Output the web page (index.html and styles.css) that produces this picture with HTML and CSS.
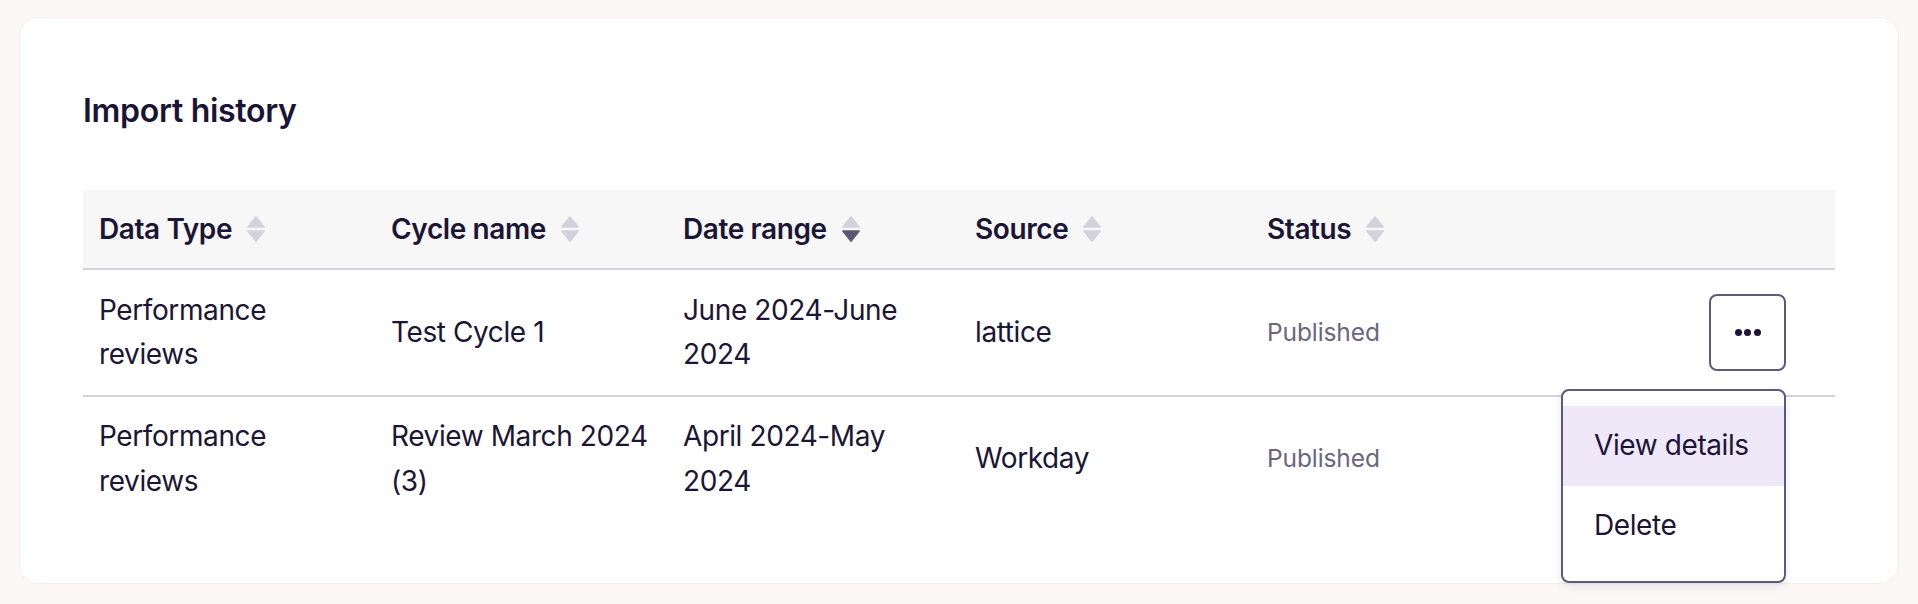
FILE: index.html
```html
<!DOCTYPE html>
<html lang="en">
<head>
<meta charset="utf-8">
<title>Import history</title>
<link rel="stylesheet" href="styles.css">
</head>
<body>
<div class="page">
  <section class="card">
    <h2 class="card-title">Import history</h2>
    <table class="history">
      <colgroup>
        <col class="col"><col class="col"><col class="col"><col class="col"><col class="col"><col class="col">
      </colgroup>
      <thead>
        <tr>
          <th><span class="th-inner">Data Type <svg class="sort" viewBox="0 0 18 26"><path class="up" d="M9 0.8 L17.2 11 L0.8 11 Z"/><path class="down" d="M0.8 15 L17.2 15 L9 25.2 Z"/></svg></span></th>
          <th><span class="th-inner">Cycle name <svg class="sort" viewBox="0 0 18 26"><path class="up" d="M9 0.8 L17.2 11 L0.8 11 Z"/><path class="down" d="M0.8 15 L17.2 15 L9 25.2 Z"/></svg></span></th>
          <th><span class="th-inner">Date range <svg class="sort active-down" viewBox="0 0 18 26"><path class="up" d="M9 0.8 L17.2 11 L0.8 11 Z"/><path class="down" d="M0.8 15 L17.2 15 L9 25.2 Z"/></svg></span></th>
          <th><span class="th-inner">Source <svg class="sort" viewBox="0 0 18 26"><path class="up" d="M9 0.8 L17.2 11 L0.8 11 Z"/><path class="down" d="M0.8 15 L17.2 15 L9 25.2 Z"/></svg></span></th>
          <th><span class="th-inner">Status <svg class="sort" viewBox="0 0 18 26"><path class="up" d="M9 0.8 L17.2 11 L0.8 11 Z"/><path class="down" d="M0.8 15 L17.2 15 L9 25.2 Z"/></svg></span></th>
          <th></th>
        </tr>
      </thead>
      <tbody>
        <tr>
          <td>Performance<br>reviews</td>
          <td>Test Cycle 1</td>
          <td>June 2024-June<br>2024</td>
          <td>lattice</td>
          <td class="status">Published</td>
          <td class="actions">
            <div class="action-wrap">
              <button class="more" type="button" aria-label="More actions"><span class="dot"></span><span class="dot"></span><span class="dot"></span></button>
              <ul class="menu">
                <li class="menu-item is-active">View details</li>
                <li class="menu-item">Delete</li>
              </ul>
            </div>
          </td>
        </tr>
        <tr>
          <td>Performance<br>reviews</td>
          <td>Review March 2024<br>(3)</td>
          <td>April 2024-May<br>2024</td>
          <td>Workday</td>
          <td class="status">Published</td>
          <td class="actions"></td>
        </tr>
      </tbody>
    </table>
  </section>
</div>
</body>
</html>
```

FILE: styles.css
```css
* { box-sizing: border-box; }

html, body {
  margin: 0;
  padding: 0;
  background: #fcf8f7;
}

body {
  font-family: "Inter", "Lato", "Liberation Sans", sans-serif;
  color: #1b1536;
}

.page {
  padding: 18px 20px 21px 20px;
}

.card {
  background: #ffffff;
  border-radius: 18px;
  padding: 70px 63px 62px 63px;
  box-shadow: 0 0 0 1px rgba(240, 232, 230, 0.6);
}

.card-title {
  margin: 0 0 57px 0;
  font-size: 32px;
  line-height: 45px;
  font-weight: 600;
  letter-spacing: -0.3px;
  color: #1b1436;
}

.history {
  width: 100%;
  border-collapse: collapse;
  table-layout: fixed;
}

.history .col { width: 16.666%; }

.history th {
  background: #f7f7f8;
  height: 79px;
  padding: 0 16px;
  text-align: left;
  font-size: 28px;
  font-weight: 600;
  letter-spacing: -0.4px;
  border-bottom: 2px solid #d4d2de;
  vertical-align: middle;
  white-space: nowrap;
}

.th-inner {
  display: inline-flex;
  align-items: center;
  gap: 15px;
}

.sort {
  width: 18px;
  height: 26px;
  display: block;
}

.sort path {
  fill: #d3d1dc;
  stroke: #d3d1dc;
  stroke-width: 1.4;
  stroke-linejoin: round;
}
.sort.active-down .down { fill: #5b5775; stroke: #5b5775; }

.history td {
  padding: 17.5px 16px;
  font-size: 28px;
  line-height: 44.8px;
  letter-spacing: -0.4px;
  vertical-align: middle;
  border-bottom: 2px solid #d4d2de;
}

.history tbody tr:last-child td { border-bottom: none; }

.history td.status {
  font-size: 24.5px;
  color: #6a667f;
  letter-spacing: -0.1px;
}

.history td.actions {
  padding-right: 49px;
}

.action-wrap {
  position: relative;
  display: flex;
  justify-content: flex-end;
}

.more {
  width: 77px;
  height: 77px;
  border: 2px solid #5d5a7a;
  border-radius: 8px;
  background: #fff;
  display: flex;
  align-items: center;
  justify-content: center;
  gap: 2.5px;
  padding: 0;
  cursor: pointer;
}

.dot {
  width: 7px;
  height: 7px;
  border-radius: 50%;
  background: #1b1436;
}

.menu {
  position: absolute;
  top: calc(100% + 18px);
  right: 0;
  width: 225px;
  margin: 0;
  padding: 15px 0;
  list-style: none;
  background: #fff;
  border: 2px solid #5d5a7a;
  border-radius: 8px;
  box-shadow: 0 3px 8px rgba(30, 20, 60, 0.10);
  z-index: 2;
}

.menu-item {
  height: 80px;
  display: flex;
  align-items: center;
  padding: 0 31px;
  font-size: 28px;
  letter-spacing: -0.4px;
  color: #1b1436;
}

.menu-item.is-active {
  background: #efe8f9;
}
```
